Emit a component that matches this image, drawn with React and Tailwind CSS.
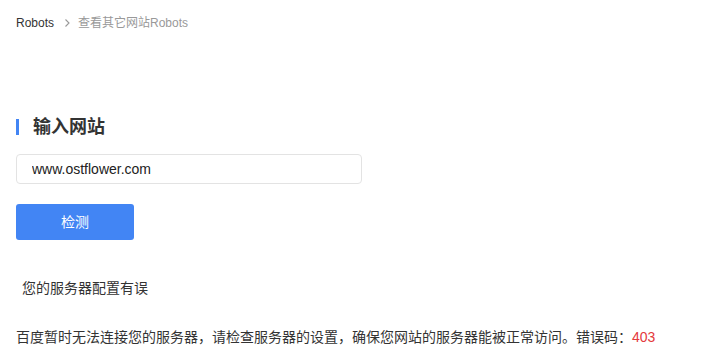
import React from 'react';

const font = { fontFamily: '"Liberation Sans", "Noto Sans CJK SC", sans-serif' };

const App = () => {
    return (
        <div className="w-[709px] h-[353px] bg-white overflow-hidden px-4" style={font}>
            {/* Breadcrumb */}
            <div className="h-[45px] flex items-center text-xs">
                <span className="text-[#333]">Robots</span>
                <svg className="ml-[8px] mr-[6px]" width="10" height="10" viewBox="0 0 10 10" fill="none">
                    <path d="M3.5 1.5 L7 5 L3.5 8.5" stroke="#999" strokeWidth="1.1" />
                </svg>
                <span className="text-[#999]">查看其它网站Robots</span>
            </div>

            {/* Title */}
            <div className="mt-[73px] flex items-center h-[18px]">
                <div className="w-[3px] h-4 bg-[#4285f4]" />
                <h2 className="ml-[14px] text-lg font-bold text-[#333] leading-none">输入网站</h2>
            </div>

            {/* Input */}
            <input
                type="text"
                defaultValue="www.ostflower.com"
                className="mt-[18px] w-[346px] h-[30px] border border-[#e3e3e3] rounded-sm px-[15px] text-sm text-[#222] outline-none block"
            />

            {/* Button */}
            <button className="mt-[20px] w-[118px] h-9 bg-[#4285f4] rounded-[3px] text-white text-sm block">
                检测
            </button>

            {/* Result */}
            <p className="mt-[40px] ml-[6px] text-sm text-[#333] leading-4">您的服务器配置有误</p>
            <p className="mt-[33px] text-sm text-[#333] leading-4">
                百度暂时无法连接您的服务器，请检查服务器的设置，确保您网站的服务器能被正常访问。错误码：<span className="text-[#e4393c]">403</span>
            </p>
        </div>
    );
};

export default App;
